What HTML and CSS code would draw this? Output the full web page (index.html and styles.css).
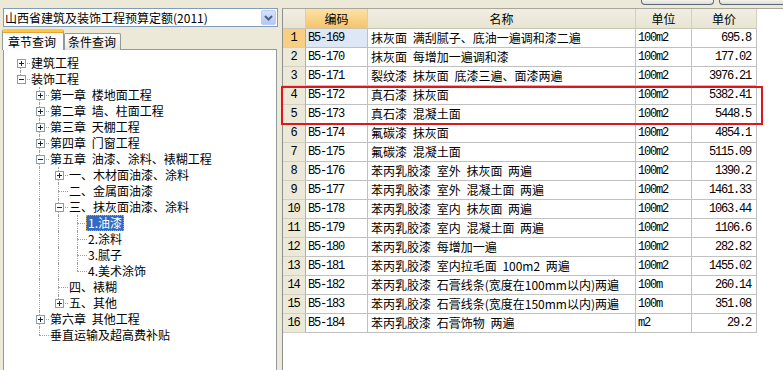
FILE: index.html
```html
<!DOCTYPE html>
<html lang="zh-CN">
<head>
<meta charset="utf-8">
<title>定额查询</title>
<link rel="stylesheet" href="styles.css">
</head>
<body>
<div class="app">
  <div class="left">
    <div class="combo">
      <span class="combo-text">山西省建筑及装饰工程预算定额(2011)</span>
      <span class="combo-btn"><svg width="13" height="13" viewBox="0 0 13 13"><path d="M3 5l3.5 3.5L10 5" fill="none" stroke="#4d6185" stroke-width="2"/></svg></span>
    </div>
    <div class="tabs">
      <div class="tab active">章节查询</div>
      <div class="tab">条件查询</div>
    </div>
    <div class="panel">
      <div class="tree">
        <div class="node"><span class="exp first"><svg class="box" width="9" height="9" viewBox="0 0 9 9"><rect x="0.5" y="0.5" width="8" height="8" fill="#fff" stroke="#8c9cac"/><path d="M2 4.5h5M4.5 2v5" stroke="#222"/></svg></span><span class="lbl">建筑工程</span></div>
        <div class="node"><span class="exp last"><svg class="box" width="9" height="9" viewBox="0 0 9 9"><rect x="0.5" y="0.5" width="8" height="8" fill="#fff" stroke="#8c9cac"/><path d="M2 4.5h5" stroke="#222"/></svg></span><span class="lbl">装饰工程</span></div>
        <div class="node"><span class="ind"></span><span class="exp mid"><svg class="box" width="9" height="9" viewBox="0 0 9 9"><rect x="0.5" y="0.5" width="8" height="8" fill="#fff" stroke="#8c9cac"/><path d="M2 4.5h5M4.5 2v5" stroke="#222"/></svg></span><span class="lbl">第一章 楼地面工程</span></div>
        <div class="node"><span class="ind"></span><span class="exp mid"><svg class="box" width="9" height="9" viewBox="0 0 9 9"><rect x="0.5" y="0.5" width="8" height="8" fill="#fff" stroke="#8c9cac"/><path d="M2 4.5h5M4.5 2v5" stroke="#222"/></svg></span><span class="lbl">第二章 墙、柱面工程</span></div>
        <div class="node"><span class="ind"></span><span class="exp mid"><svg class="box" width="9" height="9" viewBox="0 0 9 9"><rect x="0.5" y="0.5" width="8" height="8" fill="#fff" stroke="#8c9cac"/><path d="M2 4.5h5M4.5 2v5" stroke="#222"/></svg></span><span class="lbl">第三章 天棚工程</span></div>
        <div class="node"><span class="ind"></span><span class="exp mid"><svg class="box" width="9" height="9" viewBox="0 0 9 9"><rect x="0.5" y="0.5" width="8" height="8" fill="#fff" stroke="#8c9cac"/><path d="M2 4.5h5M4.5 2v5" stroke="#222"/></svg></span><span class="lbl">第四章 门窗工程</span></div>
        <div class="node"><span class="ind"></span><span class="exp mid"><svg class="box" width="9" height="9" viewBox="0 0 9 9"><rect x="0.5" y="0.5" width="8" height="8" fill="#fff" stroke="#8c9cac"/><path d="M2 4.5h5" stroke="#222"/></svg></span><span class="lbl">第五章 油漆、涂料、裱糊工程</span></div>
        <div class="node"><span class="ind"></span><span class="ind v"></span><span class="exp mid"><svg class="box" width="9" height="9" viewBox="0 0 9 9"><rect x="0.5" y="0.5" width="8" height="8" fill="#fff" stroke="#8c9cac"/><path d="M2 4.5h5M4.5 2v5" stroke="#222"/></svg></span><span class="lbl">一、木材面油漆、涂料</span></div>
        <div class="node"><span class="ind"></span><span class="ind v"></span><span class="exp mid"></span><span class="lbl">二、金属面油漆</span></div>
        <div class="node"><span class="ind"></span><span class="ind v"></span><span class="exp mid"><svg class="box" width="9" height="9" viewBox="0 0 9 9"><rect x="0.5" y="0.5" width="8" height="8" fill="#fff" stroke="#8c9cac"/><path d="M2 4.5h5" stroke="#222"/></svg></span><span class="lbl">三、抹灰面油漆、涂料</span></div>
        <div class="node"><span class="ind"></span><span class="ind v"></span><span class="ind v"></span><span class="exp mid"></span><span class="lbl sel">1.油漆</span></div>
        <div class="node"><span class="ind"></span><span class="ind v"></span><span class="ind v"></span><span class="exp mid"></span><span class="lbl">2.涂料</span></div>
        <div class="node"><span class="ind"></span><span class="ind v"></span><span class="ind v"></span><span class="exp mid"></span><span class="lbl">3.腻子</span></div>
        <div class="node"><span class="ind"></span><span class="ind v"></span><span class="ind v"></span><span class="exp last"></span><span class="lbl">4.美术涂饰</span></div>
        <div class="node"><span class="ind"></span><span class="ind v"></span><span class="exp mid"></span><span class="lbl">四、裱糊</span></div>
        <div class="node"><span class="ind"></span><span class="ind v"></span><span class="exp last"><svg class="box" width="9" height="9" viewBox="0 0 9 9"><rect x="0.5" y="0.5" width="8" height="8" fill="#fff" stroke="#8c9cac"/><path d="M2 4.5h5M4.5 2v5" stroke="#222"/></svg></span><span class="lbl">五、其他</span></div>
        <div class="node"><span class="ind"></span><span class="exp mid"><svg class="box" width="9" height="9" viewBox="0 0 9 9"><rect x="0.5" y="0.5" width="8" height="8" fill="#fff" stroke="#8c9cac"/><path d="M2 4.5h5M4.5 2v5" stroke="#222"/></svg></span><span class="lbl">第六章 其他工程</span></div>
        <div class="node"><span class="ind"></span><span class="exp last"></span><span class="lbl">垂直运输及超高费补贴</span></div>
      </div>
    </div>
  </div>
  <div class="right">
    <div class="topbar"><span class="btn b1"></span><span class="btn b2"></span></div>
    <div class="gridwrap">
      <div class="grid">
        <div class="hc corner"></div><div class="hc hsel">编码</div><div class="hc">名称</div><div class="hc">单位</div><div class="hc">单价</div>

        <div class="rn rsel">1</div><div class="c code csel">B5-169</div><div class="c name">抹灰面 满刮腻子、底油一遍调和漆二遍</div><div class="c unit">100m2</div><div class="c price">695.8</div>
        <div class="rn">2</div><div class="c code">B5-170</div><div class="c name">抹灰面 每增加一遍调和漆</div><div class="c unit">100m2</div><div class="c price">177.02</div>
        <div class="rn">3</div><div class="c code">B5-171</div><div class="c name">裂纹漆 抹灰面 底漆三遍、面漆两遍</div><div class="c unit">100m2</div><div class="c price">3976.21</div>
        <div class="rn">4</div><div class="c code">B5-172</div><div class="c name">真石漆 抹灰面</div><div class="c unit">100m2</div><div class="c price">5382.41</div>
        <div class="rn">5</div><div class="c code">B5-173</div><div class="c name">真石漆 混凝土面</div><div class="c unit">100m2</div><div class="c price">5448.5</div>
        <div class="rn">6</div><div class="c code">B5-174</div><div class="c name">氟碳漆 抹灰面</div><div class="c unit">100m2</div><div class="c price">4854.1</div>
        <div class="rn">7</div><div class="c code">B5-175</div><div class="c name">氟碳漆 混凝土面</div><div class="c unit">100m2</div><div class="c price">5115.09</div>
        <div class="rn">8</div><div class="c code">B5-176</div><div class="c name">苯丙乳胶漆 室外 抹灰面 两遍</div><div class="c unit">100m2</div><div class="c price">1390.2</div>
        <div class="rn">9</div><div class="c code">B5-177</div><div class="c name">苯丙乳胶漆 室外 混凝土面 两遍</div><div class="c unit">100m2</div><div class="c price">1461.33</div>
        <div class="rn">10</div><div class="c code">B5-178</div><div class="c name">苯丙乳胶漆 室内 抹灰面 两遍</div><div class="c unit">100m2</div><div class="c price">1063.44</div>
        <div class="rn">11</div><div class="c code">B5-179</div><div class="c name">苯丙乳胶漆 室内 混凝土面 两遍</div><div class="c unit">100m2</div><div class="c price">1106.6</div>
        <div class="rn">12</div><div class="c code">B5-180</div><div class="c name">苯丙乳胶漆 每增加一遍</div><div class="c unit">100m2</div><div class="c price">282.82</div>
        <div class="rn">13</div><div class="c code">B5-181</div><div class="c name">苯丙乳胶漆 室内拉毛面 100m2 两遍</div><div class="c unit">100m2</div><div class="c price">1455.02</div>
        <div class="rn">14</div><div class="c code">B5-182</div><div class="c name">苯丙乳胶漆 石膏线条(宽度在100mm以内)两遍</div><div class="c unit">100m</div><div class="c price">260.14</div>
        <div class="rn">15</div><div class="c code">B5-183</div><div class="c name">苯丙乳胶漆 石膏线条(宽度在150mm以内)两遍</div><div class="c unit">100m</div><div class="c price">351.08</div>
        <div class="rn">16</div><div class="c code">B5-184</div><div class="c name">苯丙乳胶漆 石膏饰物 两遍</div><div class="c unit">m2</div><div class="c price">29.2</div>
      </div>
      <div class="redbox"></div>
    </div>
  </div>
</div>
</body>
</html>
```
FILE: styles.css
```css
* { box-sizing: border-box; }
html, body { margin: 0; padding: 0; }
body {
  width: 783px;
  height: 370px;
  overflow: hidden;
  background: #ece9d8;
  font-family: "Noto Sans CJK SC", "Noto Sans", sans-serif;
  font-size: 12px;
  color: #000;
}
.app { display: flex; height: 370px; }

/* left side */
.left {
  width: 279px;
  flex: none;
  padding-top: 8px;
  display: flex;
  flex-direction: column;
}
.combo {
  margin-left: 3px;
  width: 275px;
  height: 19px;
  border: 1px solid #7f9db9;
  background: #fff;
  display: flex;
  align-items: center;
  justify-content: space-between;
}
.combo-text { padding-left: 1px; line-height: 17px; white-space: nowrap; }
.combo-btn {
  width: 15px;
  height: 15px;
  margin-right: 1px;
  border: 1px solid #bccbf0;
  border-radius: 2px;
  background: linear-gradient(#d6e2fd, #b4c8f6);
  display: flex;
  align-items: center;
  justify-content: center;
}
.tabs {
  display: flex;
  align-items: flex-end;
  height: 21px;
  margin-top: 2px;
  padding-left: 2px;
  position: relative;
  z-index: 1;
  margin-bottom: -1px;
}
.tab {
  height: 17px;
  line-height: 15px;
  padding: 0 4px 0 3px;
  border: 1px solid #919b9c;
  border-bottom: none;
  border-radius: 2px 2px 0 0;
  background: linear-gradient(#ffffff, #f3f2ec 60%, #e6e4da);
  white-space: nowrap;
}
.tab.active {
  height: 21px;
  width: 62px;
  padding: 0 0 0 5px;
  line-height: 19px;
  background: #fcfcfe;
  border-top: 3px solid #ffc83c;
  box-shadow: inset 0 1px 0 #e6a43a;
}
.panel {
  margin-left: 3px;
  width: 274px;
  flex: 1;
  border: 1px solid #919b9c;
  border-bottom: none;
  background: #fff;
}
.tree { padding: 5px 0 0 7px; }
.node { display: flex; height: 16px; align-items: center; white-space: nowrap; }
.ind, .exp {
  width: 19px;
  height: 16px;
  flex: none;
  position: relative;
  display: flex;
  align-items: center;
  justify-content: center;
}
.ind.v::before, .exp::after {
  content: "";
  position: absolute;
  left: 9px;
  top: 0;
  bottom: 0;
  border-left: 1px dotted #a0a0a0;
}
.exp.first::after { top: 8px; }
.exp.last::after { bottom: 8px; }
.exp::before {
  content: "";
  position: absolute;
  left: 9px;
  right: 0;
  top: 8px;
  border-top: 1px dotted #a0a0a0;
}
.box { position: relative; z-index: 1; display: block; shape-rendering: crispEdges; margin-left: 1px; }
.lbl {
  margin-left: -1px;
  padding: 0 2px;
  height: 16px;
  line-height: 16px;
  word-spacing: 3px;
}
.lbl.sel {
  background: #316ac5;
  color: #fff;
  outline: 1px dotted #c7aa5d;
  outline-offset: -1px;
}

/* right side */
.right {
  flex: 1;
  display: flex;
  flex-direction: column;
  padding-left: 3px;
}
.topbar {
  height: 8px;
  display: flex;
  align-items: flex-start;
  padding-left: 359px;
  gap: 5px;
}
.btn {
  height: 5px;
  border: 1px solid #5b6878;
  border-top: none;
  border-radius: 0 0 4px 4px;
  background: linear-gradient(#f4f3ee, #dedbd0);
}
.b1 { width: 73px; }
.b2 { width: 72px; border-right: none; border-radius: 0 0 0 4px; }
.gridwrap {
  flex: 1;
  position: relative;
  background: #fff;
  border-left: 1px solid #8e8f8f;
  border-top: 1px solid #a8a69a;
}
.grid {
  display: grid;
  grid-template-columns: 23px 62px 268px 56px 65px;
  grid-template-rows: 20px;
  grid-auto-rows: 19px;
  width: 474px;
}
.grid > div {
  border-right: 1px solid #c0c0c0;
  border-bottom: 1px solid #c0c0c0;
  white-space: nowrap;
  overflow: hidden;
  line-height: 18px;
}
.hc {
  background: linear-gradient(#f1efe4, #e8e4d2);
  text-align: center;
  line-height: 19px !important;
  border-right-color: #d2cfbf !important;
  border-bottom-color: #c8c5b4 !important;
}
.hc.hsel { background: linear-gradient(#fce2a6, #f5c46c); }
.rn {
  background: #ece9d8;
  text-align: center;
  font-family: "Liberation Mono", monospace;
  letter-spacing: -1.2px;
  padding-right: 1px;
  border-right-color: #b3b0a2 !important;
  border-bottom-color: #d3d0c2 !important;
}
.rn.rsel { background: #f8ce80; }
.c { padding: 0 3px; }
.name { word-spacing: 3px; }
.code, .unit, .price {
  font-family: "Liberation Mono", monospace;
  letter-spacing: -1.2px;
}
.code { padding-left: 2px; }
.unit { padding-left: 2px; }
.price { text-align: right; padding-right: 5px; }
.csel { background: #dde7f5; }
.redbox {
  position: absolute;
  left: -2px;
  top: 77px;
  width: 482px;
  height: 39px;
  border: 2px solid #e0161e;
}
```
